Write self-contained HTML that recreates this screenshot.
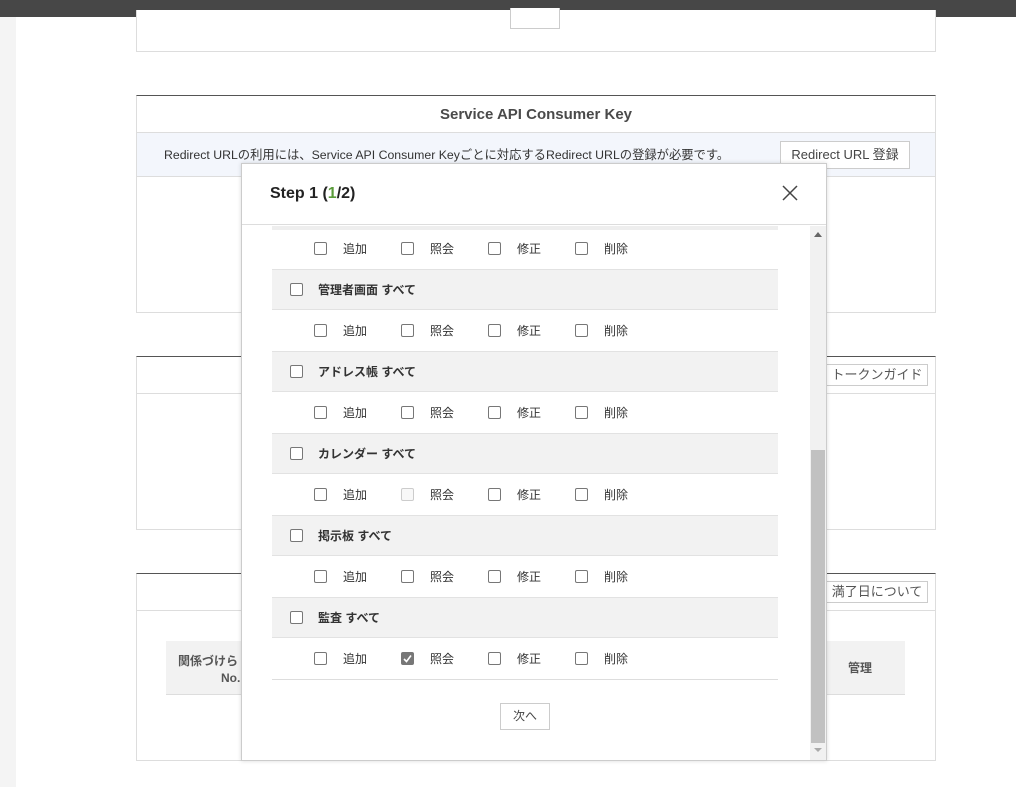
<!DOCTYPE html>
<html><head><meta charset="utf-8"><style>
*{box-sizing:border-box;margin:0;padding:0}
body{width:1016px;height:787px;overflow:hidden;background:#fff;position:relative;font-family:"Liberation Sans","Noto Sans CJK JP",sans-serif;color:#333;font-size:13px}
.abs{position:absolute}
.panel{position:absolute;left:136px;width:800px;border:1px solid #ddd;background:#fff}
.btn{position:absolute;border:1px solid #ccc;background:#fff;font-size:13px;color:#444;text-align:center}
.cb{position:absolute;width:13px;height:13px;border:1px solid #777;border-radius:2px;background:#fff}
.t{position:absolute;font-size:12px;color:#333;line-height:14px}
.g{position:absolute;left:272px;width:506px;height:41px;background:#f2f2f2;border-top:1px solid #e2e2e2;border-bottom:1px solid #e2e2e2}
</style></head><body>
<div class="abs" style="left:0;top:0;width:1016px;height:17px;background:#474747"></div>
<div class="abs" style="left:0;top:17px;width:16px;height:770px;background:#f4f4f4"></div>

<div class="panel" style="top:10px;height:42px;border-top:none"></div>
<div class="btn" style="left:510px;top:8px;width:50px;height:21px;border-top:none"></div>

<div class="panel" style="top:95px;height:218px;border-top:1px solid #555">
 <div style="height:37px;border-bottom:1px solid #ddd;text-align:center;font-weight:bold;font-size:15px;line-height:37px;color:#4a4a4a">Service API Consumer Key</div>
 <div style="height:44px;background:#f3f6fc;border-bottom:1px solid #ddd;font-size:12.3px;line-height:44px;padding-left:27px;color:#333">Redirect URLの利用には、Service API Consumer Keyごとに対応するRedirect URLの登録が必要です。</div>
</div>
<div class="btn" style="left:780px;top:141px;width:130px;height:28px;line-height:26px">Redirect URL 登録</div>

<div class="panel" style="top:356px;height:174px;border-top:1px solid #555"><div style="height:37px;border-bottom:1px solid #ddd"></div></div>
<div class="btn" style="left:826px;top:364px;width:102px;height:22px;line-height:20px;color:#555">トークンガイド</div>

<div class="panel" style="top:573px;height:188px;border-top:1px solid #555"><div style="height:37px;border-bottom:1px solid #ddd"></div></div>
<div class="btn" style="left:826px;top:581px;width:102px;height:22px;line-height:20px;color:#555">満了日について</div>
<div class="abs" style="left:166px;top:641px;width:739px;height:54px;background:#f2f2f2;border-bottom:1px solid #ddd"></div>
<div class="t" style="left:178px;top:654px;font-weight:bold;color:#555">関係づけら</div>
<div class="t" style="left:221px;top:671px;font-weight:bold;color:#555">No.</div>
<div class="t" style="left:848px;top:661px;font-weight:bold;color:#555">管理</div>

<div class="abs" style="left:241px;top:163px;width:586px;height:598px;background:#fff;border:1px solid #ccc;box-shadow:0 0 4px rgba(0,0,0,.15)">
 <div style="height:61px;border-bottom:1px solid #ddd;padding-left:28px;line-height:60px;font-weight:bold;font-size:16px;color:#222">Step 1 (<span style="color:#5a9c3a">1</span>/2)</div>
 <svg class="abs" style="left:540px;top:21px" width="16" height="16"><path d="M1 1L15 15M15 1L1 15" stroke="#444" stroke-width="1.5"/></svg>
 <div class="abs" style="left:568px;top:62px;width:16px;height:534px;background:#f1f1f1"></div>
 <div class="abs" style="left:569px;top:286px;width:14px;height:293px;background:#c1c1c1"></div>
 <div class="abs" style="left:572px;top:68px;border:4px solid transparent;border-bottom:5px solid #666;border-top:none;width:0;height:0"></div>
 <div class="abs" style="left:572px;top:584px;border:4px solid transparent;border-top:4px solid #aaa;border-bottom:none;width:0;height:0"></div>
</div>
<div class="abs" style="left:272px;top:226px;width:506px;height:4px;background:#eee"></div>

<div class="g" style="top:269px"></div><div class="g" style="top:351px"></div><div class="g" style="top:433px"></div><div class="g" style="top:515px"></div><div class="g" style="top:597px"></div>
<div class="abs" style="left:272px;top:679px;width:506px;height:1px;background:#ddd"></div>

<div id="rows"></div>
<div class="btn" style="left:500px;top:703px;width:50px;height:27px;line-height:25px;font-size:12px">次へ</div>

<script>
var h='';
var perm=[249,331,413,495,577,659];
perm.forEach(function(y,i){
 [[320,'追加'],[407,'照会'],[494,'修正'],[581,'削除']].forEach(function(c,j){
  var st='';
  if(i==3&&j==1) st='border-color:#ccc;background:#f8f8f8';
  if(i==5&&j==1) st='background:#777;border-color:#777';
  h+='<div class="cb" style="left:'+(c[0]-6)+'px;top:'+(y-7)+'px;'+st+'">'+(i==5&&j==1?'<svg width="11" height="11" style="position:absolute;left:0;top:0"><path d="M2 6L4.5 8.5L9 2.5" stroke="#fff" stroke-width="1.6" fill="none"/></svg>':'')+'</div>';
  h+='<div class="t" style="left:'+(c[0]+23)+'px;top:'+(y-7)+'px">'+c[1]+'</div>';
 });
});
var grp=[[290,'管理者画面 すべて'],[372,'アドレス帳 すべて'],[454,'カレンダー すべて'],[536,'掲示板 すべて'],[618,'監査 すべて']];
grp.forEach(function(g){
 h+='<div class="cb" style="left:290px;top:'+(g[0]-7)+'px"></div>';
 h+='<div class="t" style="left:318px;top:'+(g[0]-7)+'px;font-weight:bold">'+g[1]+'</div>';
});
document.getElementById('rows').innerHTML=h;
</script>
</body></html>
